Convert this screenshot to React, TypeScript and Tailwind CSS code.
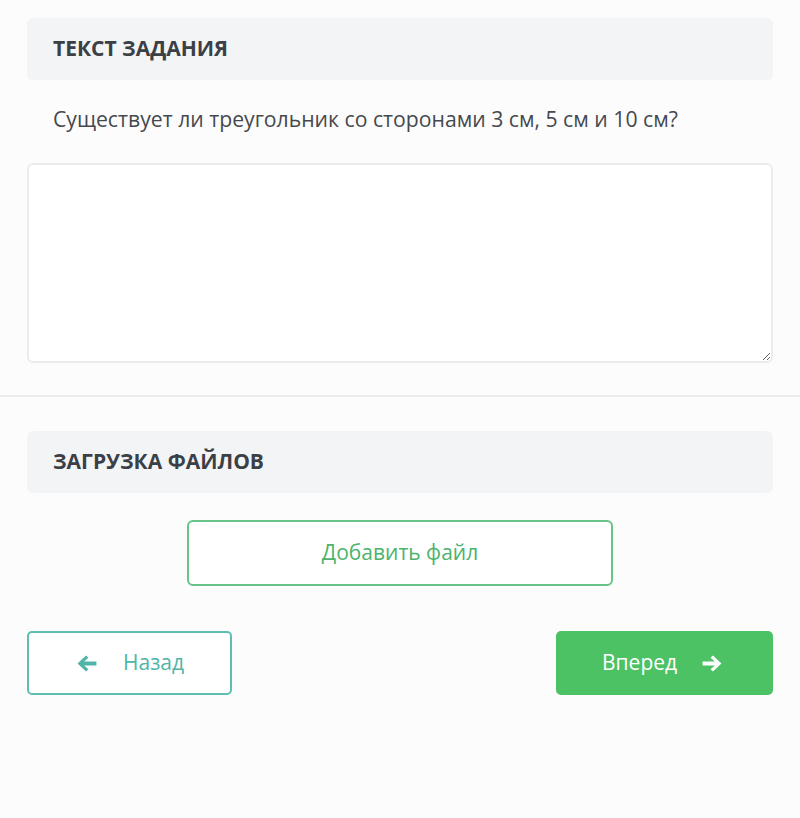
function ArrowLeft({ className }: { className?: string }) {
  return (
    <svg viewBox="0 0 20 18" className={className} fill="currentColor">
      <path d="M0 9 L9 0.5 L11.5 3 L7 7 H20 V11 H7 L11.5 15 L9 17.5 Z" />
    </svg>
  );
}

function ArrowRight({ className }: { className?: string }) {
  return (
    <svg viewBox="0 0 20 18" className={className} fill="currentColor">
      <path d="M20 9 L11 0.5 L8.5 3 L13 7 H0 V11 H13 L8.5 15 L11 17.5 Z" />
    </svg>
  );
}

function SectionTitle({ children }: { children: string }) {
  return (
    <div className="mx-[27px] h-[62px] flex items-center px-[26px] rounded-[6px] bg-[#f2f4f5]">
      <h2 className="text-[21px] font-bold uppercase text-[#3b4046]">{children}</h2>
    </div>
  );
}

export default function App() {
  return (
    <div className="min-h-[818px] bg-[#fcfcfc] pt-[18px] font-['Open_Sans',sans-serif]">
      <SectionTitle>Текст задания</SectionTitle>
      <p className="mx-[53px] mt-[24px] text-[21.2px] leading-[30px] text-[#45494e]">
        Существует ли треугольник со сторонами 3 см, 5 см и 10 см?
      </p>
      <div className="mx-[27px] mt-[29px]">
        <textarea className="block w-full h-[200px] rounded-[6px] border-2 border-[#ececec] bg-white" />
      </div>
      <div className="mt-[32px] h-[2px] bg-[#ececec]" />

      <div className="mt-[34px]">
        <SectionTitle>Загрузка файлов</SectionTitle>
      </div>

      <div className="mt-[27px] flex justify-center">
        <button className="w-[426px] h-[66px] rounded-[6px] border-2 border-[#68c486] bg-white text-[21px] text-[#4cb36c]">
          Добавить файл
        </button>
      </div>

      <div className="mx-[27px] mt-[45px] flex justify-between">
        <button className="w-[205px] h-[64px] flex items-center rounded-[5px] border-2 border-[#5dbfb2] bg-white text-[21px] text-[#4fb5a8]">
          <ArrowLeft className="ml-[48px] w-[20px] h-[17px]" />
          <span className="ml-[26px]">Назад</span>
        </button>
        <button className="w-[217px] h-[64px] flex items-center rounded-[5px] bg-[#4cc265] text-[21px] text-white">
          <span className="ml-[46px]">Вперед</span>
          <ArrowRight className="ml-[25px] w-[20px] h-[17px]" />
        </button>
      </div>
    </div>
  );
}
